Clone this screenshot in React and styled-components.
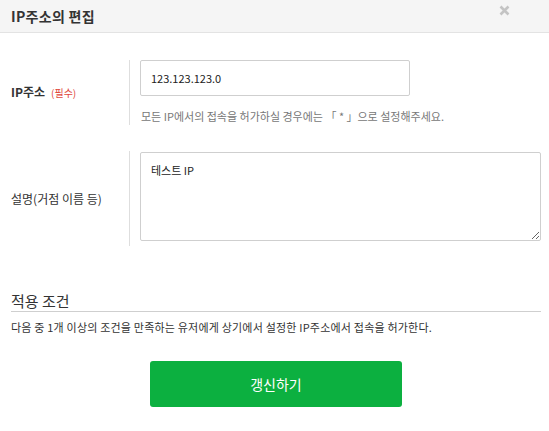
import React from 'react';
import styled, { createGlobalStyle } from 'styled-components';

const GlobalStyle = createGlobalStyle`
  body {
    margin: 0;
    background: #fff;
    font-family: "Noto Sans CJK KR", "Noto Sans", sans-serif;
    color: #333;
  }
`;

const App = () => (
  <Modal>
    <GlobalStyle />
    <Header>
      <Title>IP주소의 편집</Title>
      <CloseButton aria-label="close">
        <svg width="11" height="11" viewBox="0 0 11 11">
          <path d="M1.5 1.5 L9.5 9.5 M9.5 1.5 L1.5 9.5" stroke="#c4c4c4" strokeWidth="2.6" />
        </svg>
      </CloseButton>
    </Header>
    <Body>
      <FieldRow>
        <Label $bold>
          IP주소<Required>(필수)</Required>
        </Label>
        <FieldBody $pad="0 0 2px 10px">
          <TextInput defaultValue="123.123.123.0" />
          <Help>모든 IP에서의 접속을 허가하실 경우에는 「 * 」으로 설정해주세요.</Help>
        </FieldBody>
      </FieldRow>
      <FieldRow $gap="26px">
        <Label>설명(거점 이름 등)</Label>
        <FieldBody $pad="1px 0 5px 10px">
          <TextArea defaultValue="테스트 IP" />
        </FieldBody>
      </FieldRow>
      <SectionTitle>적용 조건</SectionTitle>
      <Notice>다음 중 1개 이상의 조건을 만족하는 유저에게 상기에서 설정한 IP주소에서 접속을 허가한다.</Notice>
      <Actions>
        <SubmitButton>갱신하기</SubmitButton>
      </Actions>
    </Body>
  </Modal>
);

const Modal = styled.div`
  width: 549px;
  height: 431px;
  background: #fff;
  overflow: hidden;
`;

const Header = styled.div`
  height: 32px;
  padding: 0 11px;
  display: flex;
  align-items: center;
  justify-content: space-between;
  background: #f5f5f5;
  border-bottom: 1px solid #e3e3e3;
`;

const Title = styled.h1`
  margin: 0;
  font-size: 14px;
  font-weight: 700;
  line-height: 20px;
  letter-spacing: 0.3px;
  color: #333;
`;

const CloseButton = styled.button`
  display: flex;
  padding: 0;
  margin: 0 28px 12px 0;
  border: none;
  background: none;
`;

const Body = styled.div`
  padding: 0 8px 0 11px;
`;

const FieldRow = styled.div`
  display: grid;
  grid-template-columns: 118px 1fr;
  align-items: center;
  margin-top: ${({ $gap }) => $gap || '27px'};
`;

const Label = styled.div`
  font-size: 12px;
  line-height: 16px;
  font-weight: ${({ $bold }) => ($bold ? 700 : 400)};
  color: #333;
`;

const Required = styled.span`
  margin-left: 6px;
  font-size: 10px;
  font-weight: 400;
  color: #e0483c;
`;

const FieldBody = styled.div`
  align-self: stretch;
  border-left: 1px solid #dedede;
  padding: ${({ $pad }) => $pad};
`;

const TextInput = styled.input`
  display: block;
  box-sizing: border-box;
  width: 270px;
  height: 36px;
  padding: 0 10px;
  border: 1px solid #cfcfcf;
  border-radius: 2px;
  font-family: inherit;
  font-size: 11px;
  color: #222;
  outline: none;
`;

const Help = styled.p`
  margin: 13px 0 0 1px;
  font-size: 11px;
  line-height: 14px;
  color: #777;
`;

const TextArea = styled.textarea`
  display: block;
  box-sizing: border-box;
  width: 401px;
  height: 89px;
  padding: 9px 10px;
  border: 1px solid #cfcfcf;
  border-radius: 2px;
  font-family: inherit;
  font-size: 11px;
  line-height: 16px;
  color: #222;
  outline: none;
`;

const SectionTitle = styled.h2`
  margin: 45px 0 0;
  font-size: 15px;
  font-weight: 400;
  line-height: 20px;
  color: #333;
  border-bottom: 1px solid #cfcfcf;
`;

const Notice = styled.p`
  margin: 7px 0 0;
  font-size: 11px;
  line-height: 16px;
  letter-spacing: 0.2px;
  color: #333;
`;

const Actions = styled.div`
  display: flex;
  justify-content: center;
  margin-top: 26px;
`;

const SubmitButton = styled.button`
  width: 252px;
  height: 46px;
  border: none;
  border-radius: 3px;
  background: #0cb040;
  color: #fff;
  font-family: inherit;
  font-size: 14px;
  cursor: pointer;
`;

export default App;
